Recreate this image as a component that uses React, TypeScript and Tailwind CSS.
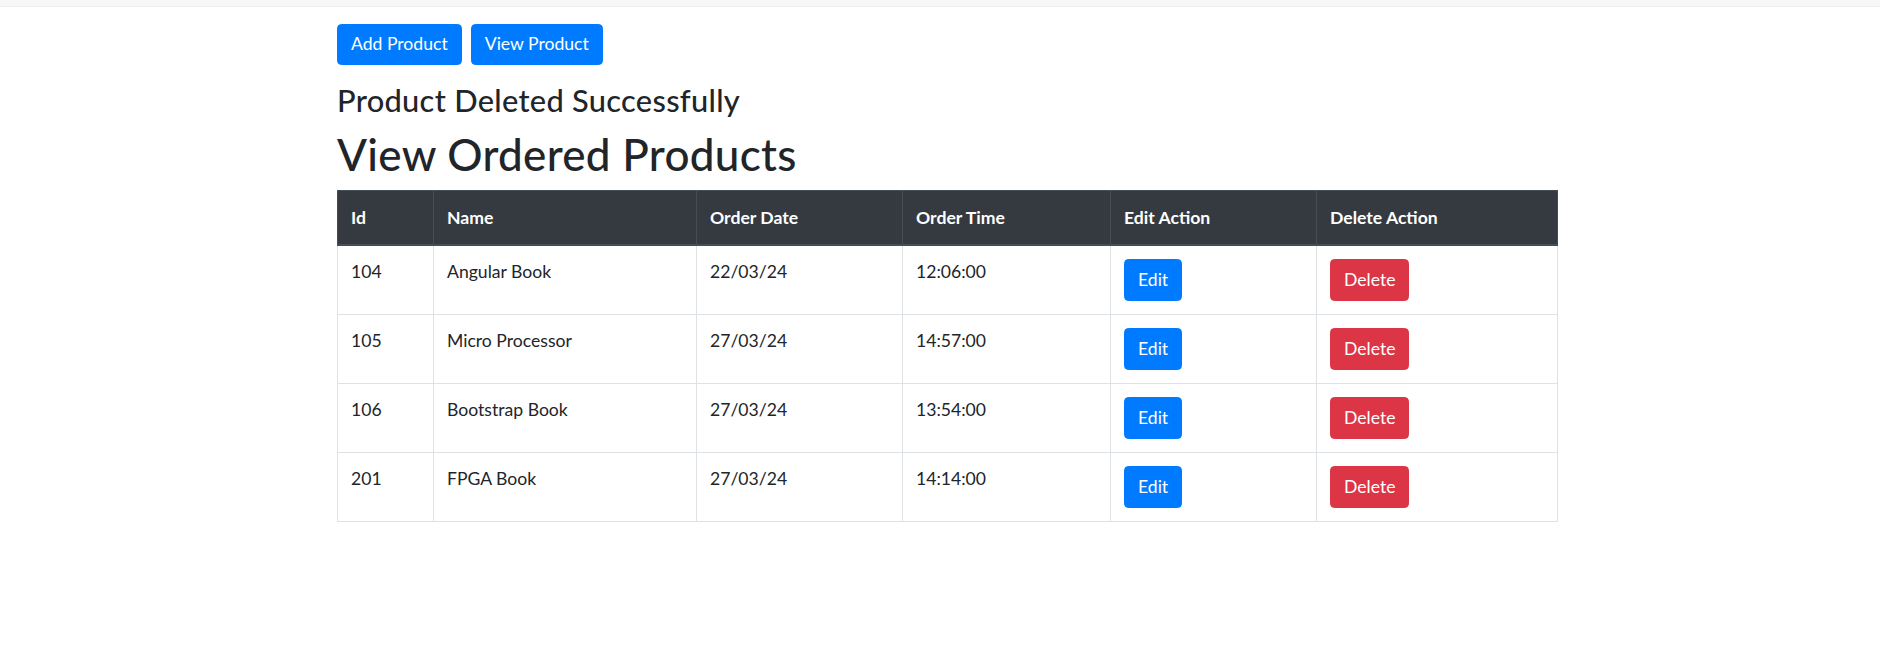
const orders = [
  { id: 104, name: 'Angular Book', date: '22/03/24', time: '12:06:00' },
  { id: 105, name: 'Micro Processor', date: '27/03/24', time: '14:57:00' },
  { id: 106, name: 'Bootstrap Book', date: '27/03/24', time: '13:54:00' },
  { id: 201, name: 'FPGA Book', date: '27/03/24', time: '14:14:00' },
]

const headers = [
  { label: 'Id', w: 'w-[96px]' },
  { label: 'Name', w: 'w-[263px]' },
  { label: 'Order Date', w: 'w-[206px]' },
  { label: 'Order Time', w: 'w-[208px]' },
  { label: 'Edit Action', w: 'w-[206px]' },
  { label: 'Delete Action', w: 'w-[241px]' },
]

export default function App() {
  return (
    <div className="min-h-screen bg-white font-['Lato','Noto_Sans',sans-serif] text-[17.6px] leading-[26.4px] text-[#212529]">
      <div className="h-[7px] border-b border-[#ececec] bg-[#f7f7f7]" />

      <div className="ml-[337px] w-[1220px] pt-[17px]">
        <div className="flex gap-[9px]">
          <button className="h-[41px] rounded-[4.4px] border border-[#007bff] bg-[#007bff] px-[13px] text-white">
            Add Product
          </button>
          <button className="h-[41px] rounded-[4.4px] border border-[#007bff] bg-[#007bff] px-[13px] text-white">
            View Product
          </button>
        </div>

        <h3 className="mt-[17px] mb-[9px] text-[30.8px] leading-[37px] font-medium tracking-[0.3px]">
          Product Deleted Successfully
        </h3>
        <h1 className="mb-[9px] text-[44px] leading-[53px] font-medium tracking-[0.3px]">
          View Ordered Products
        </h1>

        <table className="w-[1220px] table-fixed border-collapse">
          <thead>
            <tr className="bg-[#343a40] text-white">
              {headers.map((h) => (
                <th
                  key={h.label}
                  className={`${h.w} border border-b-2 border-[#454d55] px-[13px] pt-[14px] pb-[13px] text-left font-bold`}
                >
                  {h.label}
                </th>
              ))}
            </tr>
          </thead>
          <tbody>
            {orders.map((o) => (
              <tr key={o.id}>
                <td className="border border-[#dee2e6] p-[13px] align-top">{o.id}</td>
                <td className="border border-[#dee2e6] p-[13px] align-top">{o.name}</td>
                <td className="border border-[#dee2e6] p-[13px] align-top">{o.date}</td>
                <td className="border border-[#dee2e6] p-[13px] align-top">{o.time}</td>
                <td className="border border-[#dee2e6] p-[13px] align-top">
                  <button className="h-[42px] rounded-[4.4px] border border-[#007bff] bg-[#007bff] px-[13px] text-white">
                    Edit
                  </button>
                </td>
                <td className="border border-[#dee2e6] p-[13px] align-top">
                  <button className="h-[42px] rounded-[4.4px] border border-[#dc3545] bg-[#dc3545] px-[13px] text-white">
                    Delete
                  </button>
                </td>
              </tr>
            ))}
          </tbody>
        </table>
      </div>
    </div>
  )
}
